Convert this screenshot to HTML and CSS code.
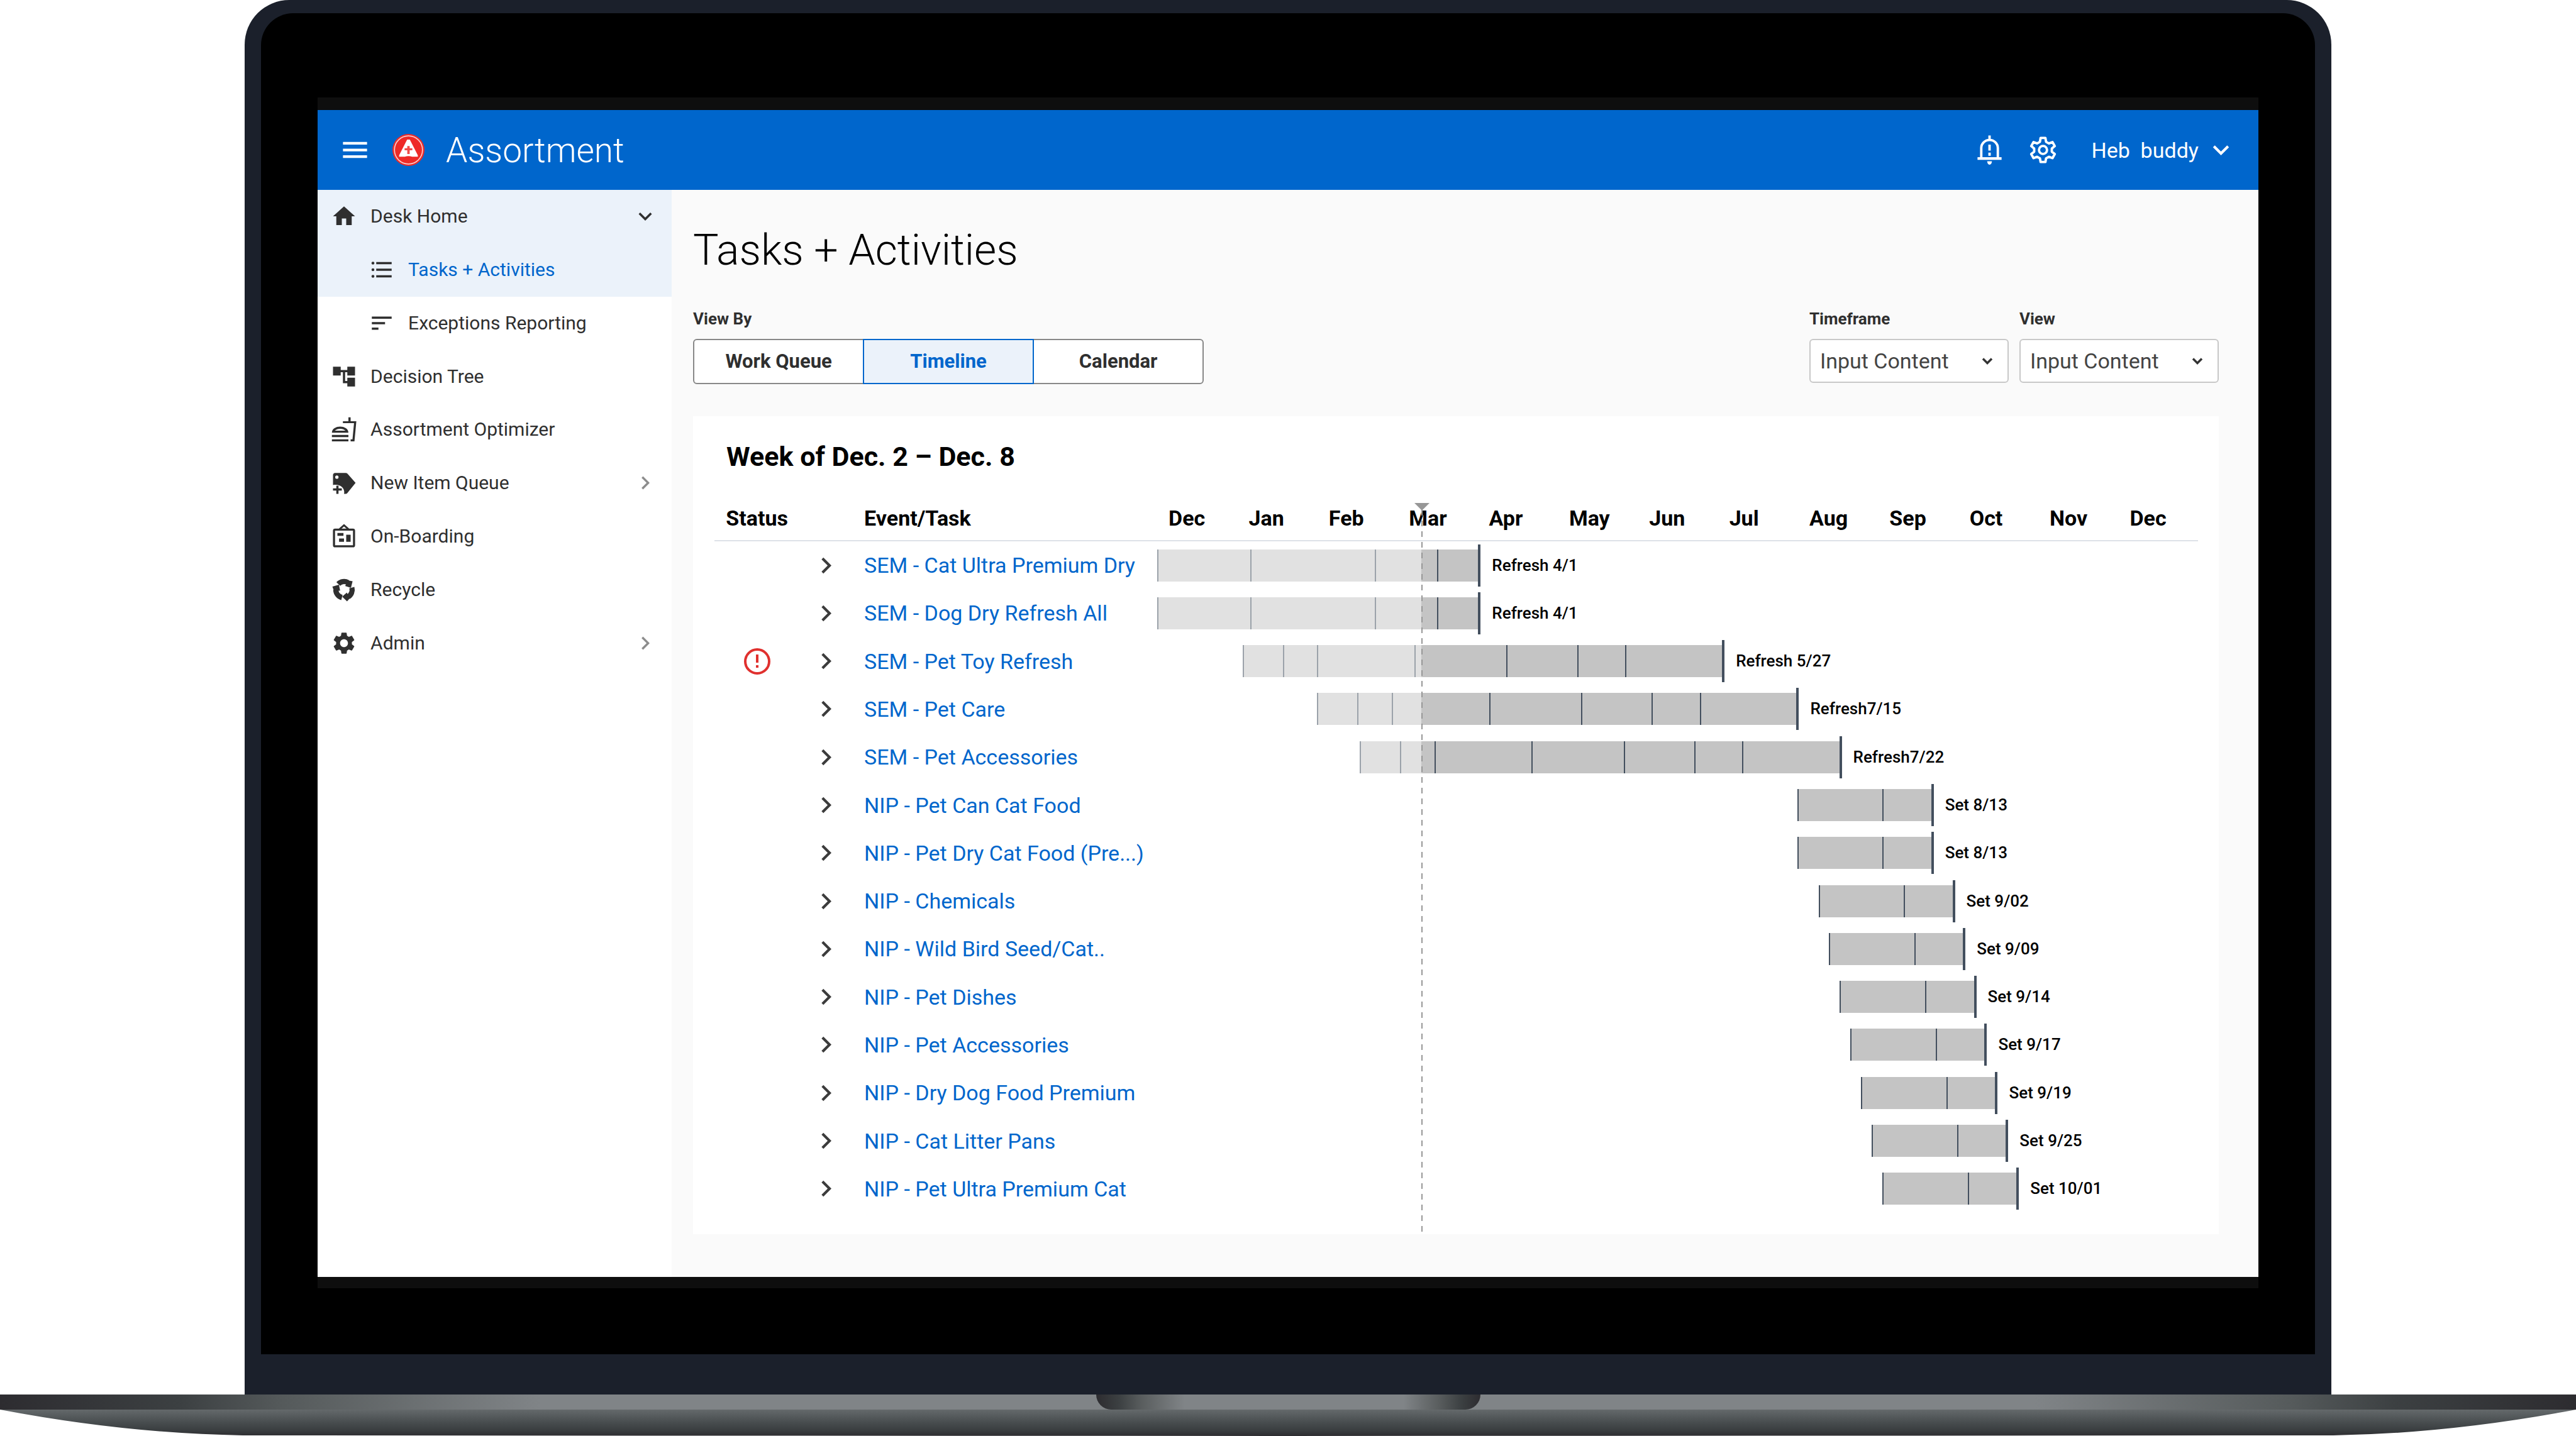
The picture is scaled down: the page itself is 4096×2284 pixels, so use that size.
FILE: index.html
```html
<!DOCTYPE html>
<html lang="en">
<head>
<meta charset="utf-8">
<meta name="viewport" content="width=device-width, initial-scale=1">
<title>Assortment – Tasks + Activities</title>
<link rel="stylesheet" href="styles.css">
</head>
<body>
<svg class="sprite" aria-hidden="true">
  <symbol id="i-right" viewBox="0 0 24 24"><path d="M8.6 16.6 13.2 12 8.6 7.4 10 6l6 6-6 6z"/></symbol>
  <symbol id="i-down" viewBox="0 0 24 24"><path d="M16.6 8.6 12 13.2 7.4 8.6 6 10l6 6 6-6z"/></symbol>
  <symbol id="i-gear" viewBox="0 0 24 24"><path d="M19.14 12.94c.04-.3.06-.61.06-.94 0-.32-.02-.64-.07-.94l2.03-1.58c.18-.14.23-.41.12-.61l-1.92-3.32c-.12-.22-.37-.29-.59-.22l-2.39.96c-.5-.38-1.03-.7-1.62-.94l-.36-2.54c-.04-.24-.24-.41-.48-.41h-3.84c-.24 0-.43.17-.47.41l-.36 2.54c-.59.24-1.13.57-1.62.94l-2.39-.96c-.22-.08-.47 0-.59.22L2.74 8.87c-.12.21-.08.47.12.61l2.03 1.58c-.05.3-.09.63-.09.94s.02.64.07.94l-2.03 1.58c-.18.14-.23.41-.12.61l1.92 3.32c.12.22.37.29.59.22l2.39-.96c.5.38 1.03.7 1.62.94l.36 2.54c.05.24.24.41.48.41h3.84c.24 0 .44-.17.47-.41l.36-2.54c.59-.24 1.13-.56 1.62-.94l2.39.96c.22.08.47 0 .59-.22l1.92-3.32c.12-.22.07-.47-.12-.61l-2.01-1.58zM12 15.6c-1.98 0-3.6-1.62-3.6-3.6s1.62-3.6 3.6-3.6 3.6 1.62 3.6 3.6-1.62 3.6-3.6 3.6z"/></symbol>
</svg>

<div class="laptop">
  <div class="lid">
    <div class="bezel">
      <div class="screen">
        <div class="app">
          <header class="topbar">
            <button class="icon-btn" type="button" aria-label="Menu">
              <svg class="icon-lg" viewBox="0 0 24 24" aria-hidden="true"><path d="M3 6h18v2H3zM3 11h18v2H3zM3 16h18v2H3z"/></svg>
            </button>
            <svg class="logo" viewBox="0 0 48 48" aria-hidden="true">
              <circle cx="24" cy="24" r="24" fill="#ee2a27"/>
              <circle cx="24" cy="24" r="21" fill="none" stroke="#fff" stroke-opacity=".75" stroke-width="1.6"/>
              <path d="M22 8.500h4L38 32v2h-8.500q-5.500-1.800-11 0H10v-2z" fill="#fff"/>
              <path d="M22.200 18h3.600v3.500h4v3h-4V30h-3.600v-5.500h-4v-3h4z" fill="#ee2a27" fill-opacity=".85"/>
            </svg>
            <span class="brand">Assortment</span>
            <div class="topbar-tools">
              <button class="icon-btn" type="button" aria-label="Notifications">
                <svg class="icon-lg line" viewBox="0 0 24 24" aria-hidden="true"><path d="M5.800 18v-7.500a6.200 6 0 0 1 12.400 0V18M12 1.200v3.200"/><path d="M3 18.400h18" stroke-width="2"/><path d="M12 8v4.500M12 14v2.300"/><path d="M10.200 20.500h3.600q-.3 2.500-1.800 2.500t-1.800-2.500z" fill="currentColor" stroke="none"/></svg>
              </button>
              <button class="icon-btn" type="button" aria-label="Settings">
                <svg class="icon-lg line" viewBox="0 0 24 24" stroke-linejoin="round" aria-hidden="true"><path d="M10.200 3h3.600l.5 2.900 2.100 1.200 2.700-1 1.700 3-2.200 1.800v2.400l2.200 1.800-1.700 3-2.700-1-2.100 1.200-.5 2.700h-3.600l-.5-2.700-2.100-1.200-2.700 1-1.700-3 2.200-1.800v-2.400L3.200 9.100l1.700-3 2.700 1 2.100-1.200z"/><circle cx="12" cy="12" r="3"/></svg>
              </button>
              <button class="user" type="button"><span>Heb&nbsp; buddy</span><svg class="icon-lg" aria-hidden="true"><use href="#i-down"/></svg></button>
            </div>
          </header>

          <div class="body">
            <nav class="sidebar" aria-label="Main">
              <a class="nav-item lit" href="#home"><svg class="icon" viewBox="0 0 24 24" aria-hidden="true"><path d="M10 20v-6h4v6h5v-8h3L12 3 2 12h3v8z"/></svg><span>Desk Home</span><svg class="icon" aria-hidden="true"><use href="#i-down"/></svg></a>
              <a class="nav-item sub lit current" href="#tasks" aria-current="page"><svg class="icon" viewBox="0 0 24 24" aria-hidden="true"><path d="M7 5h14v2H7zM7 11h14v2H7zM7 17h14v2H7z"/><circle cx="4" cy="6" r="1.300"/><circle cx="4" cy="12" r="1.300"/><circle cx="4" cy="18" r="1.300"/></svg><span>Tasks + Activities</span></a>
              <a class="nav-item sub" href="#exceptions"><svg class="icon" viewBox="0 0 24 24" aria-hidden="true"><path d="M3 18h6v-2H3v2zM3 6v2h18V6H3zm0 7h12v-2H3v2z"/></svg><span>Exceptions Reporting</span></a>
              <a class="nav-item" href="#tree"><svg class="icon" viewBox="0 0 24 24" aria-hidden="true"><path d="M22 11V3h-7v3H9V3H2v8h7V8h2v10h4v3h7v-8h-7v3h-2V8h2v3z"/></svg><span>Decision Tree</span></a>
              <a class="nav-item" href="#optimizer"><svg class="icon" viewBox="0 0 24 24" aria-hidden="true"><path d="M1 21h15v1.800H1zM1 17h15v2H1z"/><path d="M1 15c0-7.500 15-7.500 15 0zm2.700-1.800h9.600c-2.200-2.300-7.400-2.300-9.600 0z" fill-rule="evenodd"/><path d="M11 4.500h5V1h2v3.500h5.200L21.500 22.800H18V21h1.700l1.400-14.700H11z"/></svg><span>Assortment Optimizer</span></a>
              <a class="nav-item" href="#queue"><svg class="icon" viewBox="0 0 24 24" aria-hidden="true"><path fill-rule="evenodd" d="M4 3h9.500q1 0 1.700.7L22.500 12 15 21.300q-.5.700-1.500.7h-1.500c1.200-4.500-3-9.300-10-8V5q0-2 2-2zm1.500 2.300a1.500 1.500 0 1 0 0 3 1.500 1.500 0 0 0 0-3z"/><path d="M5 14.500h2V17h3v2H7v3H5v-3H2v-2h3z"/></svg><span>New Item Queue</span><svg class="icon faint" aria-hidden="true"><use href="#i-right"/></svg></a>
              <a class="nav-item" href="#onboarding"><svg class="icon" viewBox="0 0 24 24" aria-hidden="true"><rect x="2.900" y="5.900" width="18.200" height="15.200" rx="1" fill="none" stroke="currentColor" stroke-width="1.900"/><path d="M8 5.500 12 2l4 3.500" fill="none" stroke="currentColor" stroke-width="1.700"/><path d="M6 9h5.500v2.500H6zM7.500 14H12v3H7.500zM14 10.500h4V17h-4z"/></svg><span>On-Boarding</span></a>
              <a class="nav-item" href="#recycle"><svg class="icon" viewBox="0 0 24 24" aria-hidden="true"><g id="arc"><path d="M6.800 6.800A7.400 7.400 0 0 1 15.600 5.500" fill="none" stroke="currentColor" stroke-width="4.800"/><path d="M19.800 4.300 18.300 10.300l-5.300-1.800L16 3.600z"/></g><use href="#arc" transform="rotate(120 12 12)"/><use href="#arc" transform="rotate(240 12 12)"/></svg><span>Recycle</span></a>
              <a class="nav-item" href="#admin"><svg class="icon" aria-hidden="true"><use href="#i-gear"/></svg><span>Admin</span><svg class="icon faint" aria-hidden="true"><use href="#i-right"/></svg></a>
            </nav>

            <main class="main">
              <h1>Tasks + Activities</h1>
              <div class="filters">
                <div class="field">
                  <span class="label" id="viewby">View By</span>
                  <div class="segmented" role="group" aria-labelledby="viewby">
                    <button type="button">Work Queue</button>
                    <button type="button" class="active" aria-pressed="true">Timeline</button>
                    <button type="button">Calendar</button>
                  </div>
                </div>
                <div class="field push">
                  <label class="label" for="timeframe">Timeframe</label>
                  <div class="select"><select id="timeframe"><option>Input Content</option></select><svg viewBox="0 0 24 24" aria-hidden="true"><path d="m8 10 4 4 4-4"/></svg></div>
                </div>
                <div class="field">
                  <label class="label" for="view">View</label>
                  <div class="select"><select id="view"><option>Input Content</option></select><svg viewBox="0 0 24 24" aria-hidden="true"><path d="m8 10 4 4 4-4"/></svg></div>
                </div>
              </div>

              <section class="card">
                <h2>Week of Dec. 2 – Dec. 8</h2>
                <div class="schedule">
                  <table>
                    <colgroup><col class="c-status"><col class="c-open"><col class="c-task"><col span="13"></colgroup>
                    <thead><tr><th class="mid" scope="col">Status</th><td></td><th scope="col">Event/Task</th><th class="month" scope="col">Dec</th><th class="month" scope="col">Jan</th><th class="month" scope="col">Feb</th><th class="month" scope="col">Mar</th><th class="month" scope="col">Apr</th><th class="month" scope="col">May</th><th class="month" scope="col">Jun</th><th class="month" scope="col">Jul</th><th class="month" scope="col">Aug</th><th class="month" scope="col">Sep</th><th class="month" scope="col">Oct</th><th class="month" scope="col">Nov</th><th class="month" scope="col">Dec</th></tr></thead>
                    <tbody>
                      <tr><td></td><td><button class="open" type="button" aria-label="Expand"><svg class="icon-lg" aria-hidden="true"><use href="#i-right"/></svg></button></td><td><a href="#t1">SEM - Cat Ultra Premium Dry</a></td><td colspan="13"><div class="track"><i class="gap" style="width:0.06%"></i><i class="seg past" style="width:8.94%"></i><i class="seg past" style="width:11.94%"></i><i class="seg past" style="width:4.47%"></i><i class="seg rest" style="width:1.53%"></i><i class="seg" style="width:4.06%"></i><b class="due">Refresh 4/1</b></div></td></tr>
                      <tr><td></td><td><button class="open" type="button" aria-label="Expand"><svg class="icon-lg" aria-hidden="true"><use href="#i-right"/></svg></button></td><td><a href="#t2">SEM - Dog Dry Refresh All</a></td><td colspan="13"><div class="track"><i class="gap" style="width:0.06%"></i><i class="seg past" style="width:8.94%"></i><i class="seg past" style="width:11.94%"></i><i class="seg past" style="width:4.47%"></i><i class="seg rest" style="width:1.53%"></i><i class="seg" style="width:4.06%"></i><b class="due">Refresh 4/1</b></div></td></tr>
                      <tr><td class="mid"><svg class="alert" viewBox="0 0 42 42" role="img" aria-label="Needs attention"><circle cx="21" cy="21" r="19"/><path d="M21 10v13M21 27v4"/></svg></td><td><button class="open" type="button" aria-label="Expand"><svg class="icon-lg" aria-hidden="true"><use href="#i-right"/></svg></button></td><td><a href="#t3">SEM - Pet Toy Refresh</a></td><td colspan="13"><div class="track"><i class="gap" style="width:8.25%"></i><i class="seg past" style="width:3.87%"></i><i class="seg past" style="width:3.29%"></i><i class="seg past" style="width:9.36%"></i><i class="seg past" style="width:0.64%"></i><i class="seg rest" style="width:8.17%"></i><i class="seg" style="width:6.81%"></i><i class="seg" style="width:4.59%"></i><i class="seg" style="width:9.44%"></i><b class="due">Refresh 5/27</b></div></td></tr>
                      <tr><td></td><td><button class="open" type="button" aria-label="Expand"><svg class="icon-lg" aria-hidden="true"><use href="#i-right"/></svg></button></td><td><a href="#t4">SEM - Pet Care</a></td><td colspan="13"><div class="track"><i class="gap" style="width:15.41%"></i><i class="seg past" style="width:3.86%"></i><i class="seg past" style="width:3.33%"></i><i class="seg past" style="width:2.81%"></i><i class="seg rest" style="width:6.54%"></i><i class="seg" style="width:8.82%"></i><i class="seg" style="width:6.78%"></i><i class="seg" style="width:4.61%"></i><i class="seg" style="width:9.41%"></i><b class="due">Refresh7/15</b></div></td></tr>
                      <tr><td></td><td><button class="open" type="button" aria-label="Expand"><svg class="icon-lg" aria-hidden="true"><use href="#i-right"/></svg></button></td><td><a href="#t5">SEM - Pet Accessories</a></td><td colspan="13"><div class="track"><i class="gap" style="width:19.5%"></i><i class="seg past" style="width:3.87%"></i><i class="seg past" style="width:2.04%"></i><i class="seg rest" style="width:1.28%"></i><i class="seg" style="width:9.32%"></i><i class="seg" style="width:8.87%"></i><i class="seg" style="width:6.76%"></i><i class="seg" style="width:4.61%"></i><i class="seg" style="width:9.43%"></i><b class="due">Refresh7/22</b></div></td></tr>
                      <tr><td></td><td><button class="open" type="button" aria-label="Expand"><svg class="icon-lg" aria-hidden="true"><use href="#i-right"/></svg></button></td><td><a href="#t6">NIP - Pet Can Cat Food</a></td><td colspan="13"><div class="track"><i class="gap" style="width:61.51%"></i><i class="seg" style="width:8.19%"></i><i class="seg" style="width:4.8%"></i><b class="due">Set 8/13</b></div></td></tr>
                      <tr><td></td><td><button class="open" type="button" aria-label="Expand"><svg class="icon-lg" aria-hidden="true"><use href="#i-right"/></svg></button></td><td><a href="#t7">NIP - Pet Dry Cat Food (Pre...)</a></td><td colspan="13"><div class="track"><i class="gap" style="width:61.51%"></i><i class="seg" style="width:8.19%"></i><i class="seg" style="width:4.8%"></i><b class="due">Set 8/13</b></div></td></tr>
                      <tr><td></td><td><button class="open" type="button" aria-label="Expand"><svg class="icon-lg" aria-hidden="true"><use href="#i-right"/></svg></button></td><td><a href="#t8">NIP - Chemicals</a></td><td colspan="13"><div class="track"><i class="gap" style="width:63.56%"></i><i class="seg" style="width:8.19%"></i><i class="seg" style="width:4.8%"></i><b class="due">Set 9/02</b></div></td></tr>
                      <tr><td></td><td><button class="open" type="button" aria-label="Expand"><svg class="icon-lg" aria-hidden="true"><use href="#i-right"/></svg></button></td><td><a href="#t9">NIP - Wild Bird Seed/Cat..</a></td><td colspan="13"><div class="track"><i class="gap" style="width:64.57%"></i><i class="seg" style="width:8.19%"></i><i class="seg" style="width:4.8%"></i><b class="due">Set 9/09</b></div></td></tr>
                      <tr><td></td><td><button class="open" type="button" aria-label="Expand"><svg class="icon-lg" aria-hidden="true"><use href="#i-right"/></svg></button></td><td><a href="#t10">NIP - Pet Dishes</a></td><td colspan="13"><div class="track"><i class="gap" style="width:65.61%"></i><i class="seg" style="width:8.19%"></i><i class="seg" style="width:4.8%"></i><b class="due">Set 9/14</b></div></td></tr>
                      <tr><td></td><td><button class="open" type="button" aria-label="Expand"><svg class="icon-lg" aria-hidden="true"><use href="#i-right"/></svg></button></td><td><a href="#t11">NIP - Pet Accessories</a></td><td colspan="13"><div class="track"><i class="gap" style="width:66.63%"></i><i class="seg" style="width:8.19%"></i><i class="seg" style="width:4.8%"></i><b class="due">Set 9/17</b></div></td></tr>
                      <tr><td></td><td><button class="open" type="button" aria-label="Expand"><svg class="icon-lg" aria-hidden="true"><use href="#i-right"/></svg></button></td><td><a href="#t12">NIP - Dry Dog Food Premium</a></td><td colspan="13"><div class="track"><i class="gap" style="width:67.66%"></i><i class="seg" style="width:8.19%"></i><i class="seg" style="width:4.8%"></i><b class="due">Set 9/19</b></div></td></tr>
                      <tr><td></td><td><button class="open" type="button" aria-label="Expand"><svg class="icon-lg" aria-hidden="true"><use href="#i-right"/></svg></button></td><td><a href="#t13">NIP - Cat Litter Pans</a></td><td colspan="13"><div class="track"><i class="gap" style="width:68.68%"></i><i class="seg" style="width:8.19%"></i><i class="seg" style="width:4.8%"></i><b class="due">Set 9/25</b></div></td></tr>
                      <tr><td></td><td><button class="open" type="button" aria-label="Expand"><svg class="icon-lg" aria-hidden="true"><use href="#i-right"/></svg></button></td><td><a href="#t14">NIP - Pet Ultra Premium Cat</a></td><td colspan="13"><div class="track"><i class="gap" style="width:69.7%"></i><i class="seg" style="width:8.19%"></i><i class="seg" style="width:4.8%"></i><b class="due">Set 10/01</b></div></td></tr>
                    </tbody>
                  </table>
                  <div class="now-layer" aria-hidden="true"><div class="now" style="left:25.41%"></div></div>
                </div>
              </section>
            </main>
          </div>
        </div>
      </div>
    </div>
  </div>
  <div class="deck"><div class="notch"></div></div>
  <svg class="base" viewBox="0 0 4096 42" preserveAspectRatio="none" aria-hidden="true">
    <defs><linearGradient id="baseFill" x1="0" y1="0" x2="0" y2="1"><stop offset="0" stop-color="#64696b"/><stop offset=".5" stop-color="#474c4e"/><stop offset=".8" stop-color="#393d3f"/><stop offset="1" stop-color="#2d2c30"/></linearGradient></defs>
    <path d="M0 0H4096Q3896 38 3710 41L2048 42 386 41Q200 38 0 0z" fill="url(#baseFill)"/>
  </svg>
</div>
</body>
</html>
```
FILE: styles.css
```css
* { box-sizing: border-box; }

body {
  margin: 0;
  background: #fff;
  color: #2f2f2f;
  font-family: Roboto, "Liberation Sans", sans-serif;
  font-size: 34px;
  line-height: 40px;
}

button, select { font: inherit; color: inherit; }
button { padding: 0; border: 0; background: none; cursor: pointer; }
a { color: inherit; text-decoration: none; }
h1, h2 { margin: 0; }
svg { display: block; fill: currentColor; }

.sprite { position: absolute; width: 0; height: 0; }
.icon { width: 42px; height: 42px; flex: none; }
.icon-lg { width: 51px; height: 51px; flex: none; }
.line { fill: none; stroke: currentColor; stroke-width: 1.8; }

/* Laptop shell */
.laptop { overflow: hidden; }

.lid {
  margin: 0 9.5%;
  padding: 21px 26px 64px;
  background: #1b202b;
  border-radius: 71px 71px 0 0;
}

.bezel {
  padding: 134px 90px 105px;
  background: #000;
  border-radius: 51px 51px 0 0;
}

.screen { padding: 20px 0 18px; background: #0e0e0e; }

.deck {
  height: 24px;
  background: linear-gradient(90deg, #2d2c30, #3c4042 7%, #555a5b 11%, #808487 21%, #808487 79%, #555a5b 89%, #3c4042 93%, #2d2c30);
}

.notch {
  width: 611px;
  height: 24px;
  margin: 0 auto;
  border-radius: 0 0 24px 24px;
  background: linear-gradient(90deg, #2d2c30, #3c4042 6%, #5a5e5f 12%, #808487 23%, #808487 80%, #5a5e5f 89%, #3c4042 95%, #2d2c30);
}

.base { width: 100%; height: 42px; }

/* Top bar */
.topbar {
  display: flex;
  align-items: center;
  height: 127px;
  padding: 0 34px;
  background: #06c;
  color: #fff;
}

.logo { width: 51px; height: 51px; margin: 0 34px; }
.brand { font-size: 55px; font-weight: 300; line-height: 64px; }
.topbar-tools { display: flex; align-items: center; gap: 34px; margin-left: auto; }
.user { display: flex; align-items: center; gap: 10px; margin-left: 17px; }

/* Side navigation */
.body { display: grid; grid-template-columns: 563px 1fr; background: #fff; }
.sidebar { display: grid; grid-auto-rows: 1fr; align-self: start; height: 763px; }

.nav-item {
  display: flex;
  align-items: center;
  gap: 21px;
  padding: 0 21px;
  font-size: 30px;
}

.nav-item span { flex: 1; }
.nav-item.sub { padding-left: 81px; }
.nav-item.lit { background: #ebf2fa; }
.nav-item.current span { color: #06c; }
.faint { color: #8c8c8c; }

/* Page */
.main { padding: 54px 63px 68px 34px; background: #fafafa; }

h1 {
  margin-bottom: 52px;
  color: #000;
  font-size: 68px;
  font-weight: 300;
  line-height: 84px;
}

.filters { display: flex; gap: 17px; margin-bottom: 51px; height: 119px; }
.field { display: flex; flex-direction: column; gap: 17px; }
.push { margin-left: auto; }
.label { font-size: 26px; font-weight: 700; line-height: 30px; }

.segmented { display: flex; height: 72px; }

.segmented button {
  width: 272px;
  border: 2px solid #888;
  background: #fff;
  font-size: 31px;
  font-weight: 700;
}

.segmented button + button { margin-left: -2px; }
.segmented button:first-child { border-radius: 6px 0 0 6px; }
.segmented button:last-child { border-radius: 0 6px 6px 0; }
.segmented .active { position: relative; border-color: #06c; background: #ebf2fa; color: #06c; }

.select { position: relative; width: 317px; }

.select select {
  appearance: none;
  width: 100%;
  height: 70px;
  padding: 0 50px 0 15px;
  border: 2px solid #c8c8c8;
  border-radius: 6px;
  background: #fff;
  color: #444;
}

.select svg {
  position: absolute;
  top: 14px;
  right: 13px;
  width: 42px;
  height: 42px;
  fill: none;
  stroke: #333;
  stroke-width: 2;
  pointer-events: none;
}

/* Schedule */
.card { padding: 39px 33px 34px 34px; background: #fff; color: #000; }
h2 { margin: 0 0 49px 19px; font-size: 43px; font-weight: 700; line-height: 50px; }
.schedule { position: relative; }

table { width: 100%; table-layout: fixed; border-collapse: separate; border-spacing: 0; }
.c-status { width: 135px; }
.c-open { width: 103px; }
.c-task { width: 465px; }

th, td { padding: 0; text-align: left; white-space: nowrap; }
thead th, thead td { padding: 4px 0 15px; border-bottom: 2px solid #dde1e8; font-weight: 700; }
thead .month { padding-left: 19px; }
.mid { text-align: center; }
tbody { height: 1068px; }
tbody a { color: #06c; }

.open { display: block; margin-left: 17px; color: #3c3c3c; }
.alert { width: 42px; height: 42px; margin: 0 auto; fill: none; stroke: #e0302e; stroke-width: 4; }

.track { display: flex; align-items: center; }
.gap, .seg { flex: none; }
.seg { height: 51px; border-left: 2px solid #434f5e; background: #c4c4c4; }
.past { border-color: #9ba2aa; background: #e1e1e1; }
.rest { border-left: 0; }

.due {
  margin-left: -2px;
  padding-left: 18px;
  border-left: 4px solid #434f5e;
  font-size: 26px;
  font-weight: 500;
  line-height: 67px;
}

/* Current-date marker drawn over the month columns */
.now-layer { position: absolute; inset: 0 0 -34px 703px; pointer-events: none; }

.now {
  position: absolute;
  top: 11px;
  bottom: 0;
  width: 2px;
  background: repeating-linear-gradient(#979797 0 9px, transparent 9px 17px);
}

.now::before {
  content: "";
  position: absolute;
  top: -11px;
  left: -11px;
  border: 12px solid transparent;
  border-top-color: #979797;
  border-bottom: 0;
}
```
